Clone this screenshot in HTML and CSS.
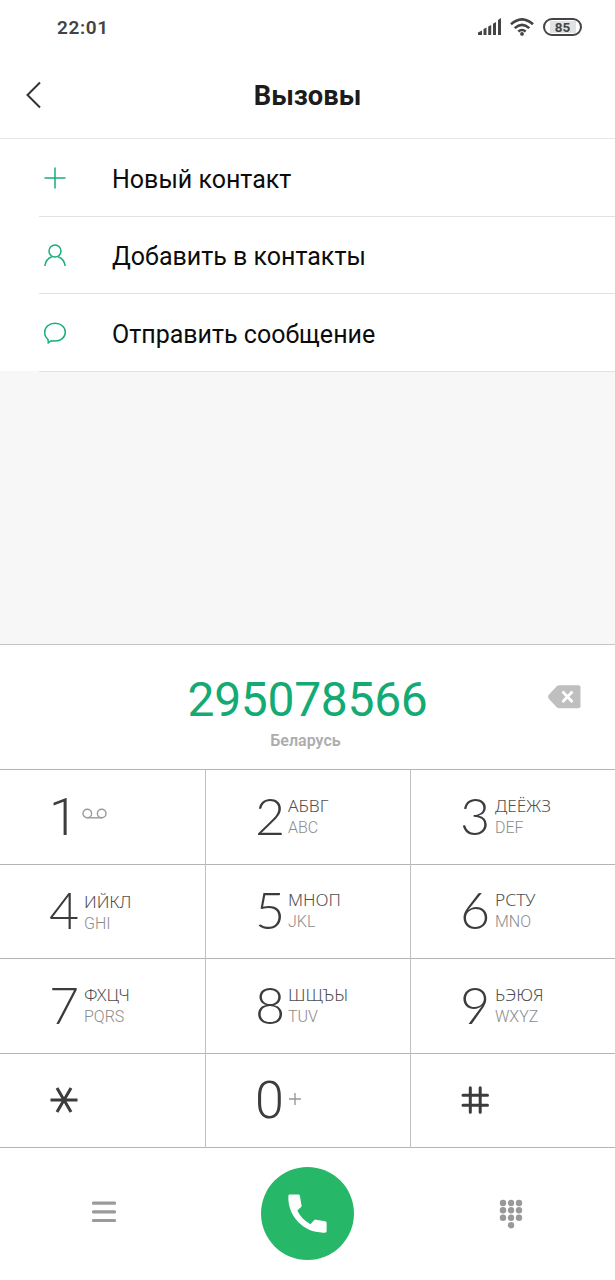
FILE: index.html
```html
<!DOCTYPE html>
<html lang="ru">
<head>
    <meta charset="UTF-8">
    <meta name="viewport" content="width=device-width, initial-scale=1.0">
    <title>Вызовы</title>
    <link rel="stylesheet" href="styles.css">
</head>
<body>
    <div class="phone">
        <div class="status-bar">
            <span class="time">22:01</span>
            <div class="status-icons">
                <svg class="signal" width="24" height="18" viewBox="0 0 24 18">
                    <path d="M0 18v-2.500l4-2V18zM5.500 18v-6l3-1.500V18zM10.200 18V9.500l3-1.500V18zM15 18V6.700l3-1.700V18zM20 18V3l3-2v17z"/>
                </svg>
                <svg class="wifi" width="24" height="18" viewBox="0 0 24 18">
                    <path d="M1 6.300Q12-3.600 23 6.300M4.700 10.100Q12 3.600 19.300 10.100M8.300 13.600Q12 10.400 15.700 13.600"/>
                    <circle cx="12" cy="15.900" r="1.900"/>
                </svg>
                <span class="battery"><span>85</span></span>
            </div>
        </div>

        <header class="header">
            <svg class="back" width="16" height="28" viewBox="0 0 16 28">
                <path d="M14 1.500L1.500 14L14 26.500"/>
            </svg>
            <h1>Вызовы</h1>
        </header>

        <ul class="menu">
            <li>
                <svg width="24" height="24" viewBox="0 0 24 24"><path d="M12 1.500v21M1.500 12h21"/></svg>
                <span>Новый контакт</span>
            </li>
            <li>
                <svg width="24" height="24" viewBox="0 0 24 24">
                    <circle cx="12" cy="7" r="6"/>
                    <path d="M1.800 22C2.500 17 5.300 14 8.800 12.700M15.200 12.700C18.700 14 21.500 17 22.200 22"/>
                </svg>
                <span>Добавить в контакты</span>
            </li>
            <li>
                <svg width="24" height="24" viewBox="0 0 24 24">
                    <path d="M5 17.300C2.800 15.600 1.700 13 1.700 10.300C1.700 5 6.300 1.200 12 1.200S22.300 5 22.300 10.300S17.700 19 12 19C10.500 19 9.300 18.900 8.200 18.700L5.300 20.800z"/>
                </svg>
                <span>Отправить сообщение</span>
            </li>
        </ul>

        <div class="spacer"></div>

        <section class="number">
            <p class="digits">295078566</p>
            <p class="country">Беларусь</p>
            <svg class="erase" width="33" height="24" viewBox="0 0 33 24">
                <path class="erase-body" d="M9 1Q10 .3 11.500 .3H30.500Q32.500 .3 32.500 2.300V21.200Q32.500 23.200 30.500 23.200H11.500Q10 23.200 9 22.400L1 14Q-.8 11.800 1 9.500z"/>
                <path class="erase-cross" d="M14.500 6.500l10 10.500M24.500 6.500l-10 10.500"/>
            </svg>
        </section>

        <div class="keypad">
            <div class="key">
                <span class="digit one">1</span>
                <svg class="voicemail" width="26" height="12" viewBox="0 0 26 12">
                    <circle cx="5.300" cy="5.500" r="4.300"/>
                    <circle cx="19.700" cy="5.500" r="4.300"/>
                    <path d="M5.300 9.800h14.400"/>
                </svg>
            </div>
            <div class="key">
                <span class="digit">2</span>
                <div class="letters"><p>АБВГ</p><p class="latin">ABC</p></div>
            </div>
            <div class="key">
                <span class="digit">3</span>
                <div class="letters"><p>ДЕЁЖЗ</p><p class="latin">DEF</p></div>
            </div>
            <div class="key low">
                <span class="digit">4</span>
                <div class="letters"><p>ИЙКЛ</p><p class="latin">GHI</p></div>
            </div>
            <div class="key">
                <span class="digit">5</span>
                <div class="letters"><p>МНОП</p><p class="latin">JKL</p></div>
            </div>
            <div class="key">
                <span class="digit">6</span>
                <div class="letters"><p>РСТУ</p><p class="latin">MNO</p></div>
            </div>
            <div class="key">
                <span class="digit">7</span>
                <div class="letters"><p>ФХЦЧ</p><p class="latin">PQRS</p></div>
            </div>
            <div class="key">
                <span class="digit">8</span>
                <div class="letters"><p>ШЩЪЫ</p><p class="latin">TUV</p></div>
            </div>
            <div class="key">
                <span class="digit">9</span>
                <div class="letters"><p>ЬЭЮЯ</p><p class="latin">WXYZ</p></div>
            </div>
            <div class="key">
                <svg class="sign" width="28" height="28" viewBox="0 0 28 28" role="img" aria-label="*">
                    <path d="M.5 14h27M7 2l14 24M21 2L7 26"/>
                </svg>
            </div>
            <div class="key">
                <span class="digit zero">0</span>
                <svg class="plus" width="12" height="12" viewBox="0 0 12 12" role="img" aria-label="+">
                    <path d="M6 0v12M0 6h12"/>
                </svg>
            </div>
            <div class="key">
                <svg class="sign round" width="28" height="28" viewBox="0 0 28 28" role="img" aria-label="#">
                    <path d="M9.300 1.700v24.600M19.200 1.700v24.600M2 9.300h24.500M2 19.200h24.500"/>
                </svg>
            </div>
        </div>

        <footer class="actions">
            <svg class="list" width="24" height="22" viewBox="0 0 24 22">
                <path d="M1.500 2.200h21M1.500 10.900h21M1.500 19.500h21"/>
            </svg>
            <div class="call">
                <svg width="51" height="51" viewBox="0 0 24 24">
                    <path d="M7.200 10.600C8.500 13.500 10.700 15.600 13.400 17L15.200 15.100Q15.500 14.800 16 14.900L20.300 15.600Q21 15.700 21 16.300V20.300Q21 21 20.200 21C10.500 21.500 2.500 13.500 3 3.700Q3 3 3.700 3H7.600Q8.300 3 8.400 3.700L9.200 8.200Q9.300 8.700 8.900 9z"/>
                </svg>
            </div>
            <svg class="dots" width="24" height="30" viewBox="0 0 24 30">
                <circle cx="4" cy="4" r="3.200"/><circle cx="12" cy="4" r="3.200"/><circle cx="20" cy="4" r="3.200"/>
                <circle cx="4" cy="11.300" r="3.200"/><circle cx="12" cy="11.300" r="3.200"/><circle cx="20" cy="11.300" r="3.200"/>
                <circle cx="4" cy="18.800" r="3.200"/><circle cx="12" cy="18.800" r="3.200"/><circle cx="20" cy="18.800" r="3.200"/>
                <circle cx="12" cy="26.200" r="3.200"/>
            </svg>
        </footer>
    </div>
</body>
</html>
```
FILE: styles.css
```css
* {
    margin: 0;
    padding: 0;
    box-sizing: border-box;
}
body {
    background-color: white;
    font-family: Roboto, sans-serif;
}
svg {
    display: block;
    flex: none;
}
.phone {
    width: 615px;
    height: 1280px;
    display: flex;
    flex-direction: column;
    overflow: hidden;
}

/* status bar */
.status-bar {
    height: 54px;
    padding: 0 33px 0 57px;
    display: flex;
    justify-content: space-between;
    align-items: center;
    color: #444;
}
.time {
    font-size: 19px;
    font-weight: 600;
    letter-spacing: 0.6px;
    padding-top: 1px;
}
.status-icons {
    display: flex;
    align-items: center;
    gap: 8px;
}
.signal {
    fill: #444;
    margin-bottom: 2px;
}
.wifi {
    fill: none;
    stroke: #444;
    stroke-width: 2.6;
}
.wifi circle {
    fill: #444;
    stroke: none;
}
.battery {
    width: 39px;
    height: 18px;
    margin-left: 1px;
    border: 2px solid #444;
    border-radius: 9px;
    display: flex;
    justify-content: center;
    align-items: center;
    font-size: 13.500px;
    font-weight: 700;
}
.battery span {
    width: 26px;
    line-height: 12px;
    text-align: center;
    background-color: #e2e2e2;
}

/* header */
.header {
    height: 85px;
    padding: 0 26px;
    border-bottom: 1px solid #e6e6e6;
    display: grid;
    grid-template-columns: 16px 1fr 16px;
    align-items: center;
}
.back {
    fill: none;
    stroke: #333;
    stroke-width: 2;
    margin-bottom: 3px;
}
.header h1 {
    font-size: 27.300px;
    font-weight: 700;
    color: #1c1c1c;
    text-align: center;
}

/* contact actions */
.menu {
    list-style: none;
    background: linear-gradient(to right, #f7f7f7, #f7f7f7) left bottom / 39px 1px no-repeat;
    padding-left: 39px;
}
.menu li {
    height: 77.66px;
    padding-left: 4px;
    border-bottom: 1px solid #e2e2e2;
    display: flex;
    align-items: center;
    gap: 45px;
    font-size: 25px;
    color: #0c0c0c;
}
.menu li span {
    padding-top: 4px;
}
.menu svg {
    margin-top: 2px;
    fill: none;
    stroke: #16af78;
    stroke-width: 1.500;
}
.spacer {
    flex: 1;
    background-color: #f7f7f7;
}

/* dialed number */
.number {
    height: 125px;
    border-top: 1px solid #c4c4c4;
    position: relative;
    text-align: center;
}
.digits {
    margin-top: 27px;
    font-size: 48px;
    line-height: 56px;
    letter-spacing: -0.3px;
    color: #14aa74;
}
.country {
    margin-top: 3px;
    font-size: 16px;
    line-height: 19px;
    font-weight: 600;
    color: #adadad;
    padding-right: 4px;
}
.erase {
    position: absolute;
    right: 34px;
    top: 40px;
}
.erase-body {
    fill: #bfbfbf;
}
.erase-cross {
    fill: none;
    stroke: white;
    stroke-width: 2.800;
}

/* keypad */
.keypad {
    height: 379px;
    border-top: 1px solid #b4b4b4;
    display: grid;
    grid-template-columns: 206px 205px 204px;
    grid-template-rows: repeat(4, 1fr);
}
.key {
    padding-left: 50px;
    border-right: 1px solid #c0c0c0;
    border-bottom: 1px solid #b4b4b4;
    display: flex;
    align-items: center;
}
.key:nth-child(3n) {
    border-right: none;
}
.key:nth-child(3n+2) .letters {
    margin-left: -1px;
}
.digit {
    width: 30px;
    margin: 0 4px 0 -1px;
    padding-bottom: 4px;
    font-family: Lato, sans-serif;
    font-size: 52px;
    font-weight: 300;
    line-height: 60px;
    color: #3c3c3c;
}
.letters {
    margin-left: 1px;
    font-family: "Noto Sans", sans-serif;
    font-size: 17.300px;
    font-weight: 300;
    line-height: 22px;
    color: #505050;
}
.letters .latin {
    font-family: Roboto, sans-serif;
    font-size: 16px;
    color: #8c8c8c;
}
.low .letters {
    padding-top: 3px;
}
/* narrow numerals without a foot */
.one, .zero {
    font-family: Roboto, sans-serif;
    font-weight: 300;
    padding: 2px 0 0;
}
.voicemail, .plus {
    fill: none;
    stroke: #999;
    stroke-width: 1.400;
}
.voicemail {
    margin: 0 0 5px -1px;
}
.plus {
    margin-bottom: 2px;
}
.sign {
    fill: none;
    stroke: #3c3c3c;
    stroke-width: 3;
}
.round {
    stroke-linecap: round;
}

/* bottom actions */
.actions {
    height: 132px;
    padding: 0 92px 2px;
    display: flex;
    justify-content: space-between;
    align-items: center;
}
.list {
    fill: none;
    stroke: #9a9a9a;
    stroke-width: 3.200;
    stroke-linecap: round;
    margin-bottom: 3px;
}
.call {
    width: 93px;
    height: 93px;
    border-radius: 50%;
    background-color: #27b768;
    display: flex;
    justify-content: center;
    align-items: center;
}
.call svg {
    fill: white;
}
.dots {
    fill: #999;
    margin-top: 2px;
}
```
